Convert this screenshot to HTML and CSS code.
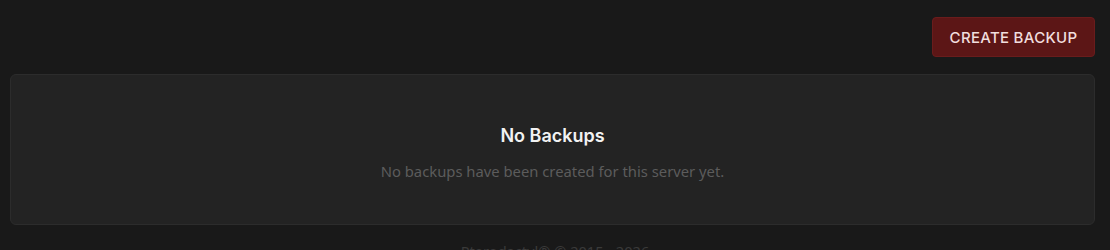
FILE: index.html
```html
<!DOCTYPE html>
<html>
<head>
<meta charset="utf-8">
<link rel="stylesheet" href="styles.css">
</head>
<body>
<div class="page">
  <div class="toolbar">
    <button class="btn-create">CREATE BACKUP</button>
  </div>
  <div class="empty-card">
    <h2 class="empty-title">No Backups</h2>
    <p class="empty-text">No backups have been created for this server yet.</p>
  </div>
  <div class="footer">Pterodactyl® © 2015 - 2026</div>
</div>
</body>
</html>
```
FILE: styles.css
```css
html, body {
  margin: 0;
  padding: 0;
  background: #191919;
}
body {
  font-family: "Noto Sans", "Open Sans", sans-serif;
}
.page {
  padding: 17px 15px 0 10px;
}
.toolbar {
  display: flex;
  justify-content: flex-end;
}
.btn-create {
  height: 40px;
  width: 163px;
  background: #5c1616;
  color: #f1dede;
  border: 1px solid #6a1c1c;
  border-radius: 4px;
  font-family: "Inter", "Noto Sans", sans-serif;
  font-size: 15px;
  font-weight: 500;
  letter-spacing: 0.3px;
  cursor: pointer;
}
.empty-card {
  margin-top: 17px;
  height: 149px;
  background: #232323;
  border: 1px solid #2c2c2c;
  border-radius: 6px;
  display: flex;
  flex-direction: column;
  align-items: center;
  box-sizing: content-box;
}
.empty-title {
  margin: 49px 0 0 0;
  font-family: "Inter", "Noto Sans", sans-serif;
  font-size: 18px;
  font-weight: 600;
  color: #f2f2f2;
  line-height: 24px;
}
.empty-text {
  margin: 13px 0 0 0;
  font-size: 14.8px;
  color: #5c5c5c;
  line-height: 20px;
}
.footer {
  margin-top: 16px;
  text-align: center;
  font-size: 14.6px;
  color: #3a3a3a;
  padding-left: 5px;
}
```
